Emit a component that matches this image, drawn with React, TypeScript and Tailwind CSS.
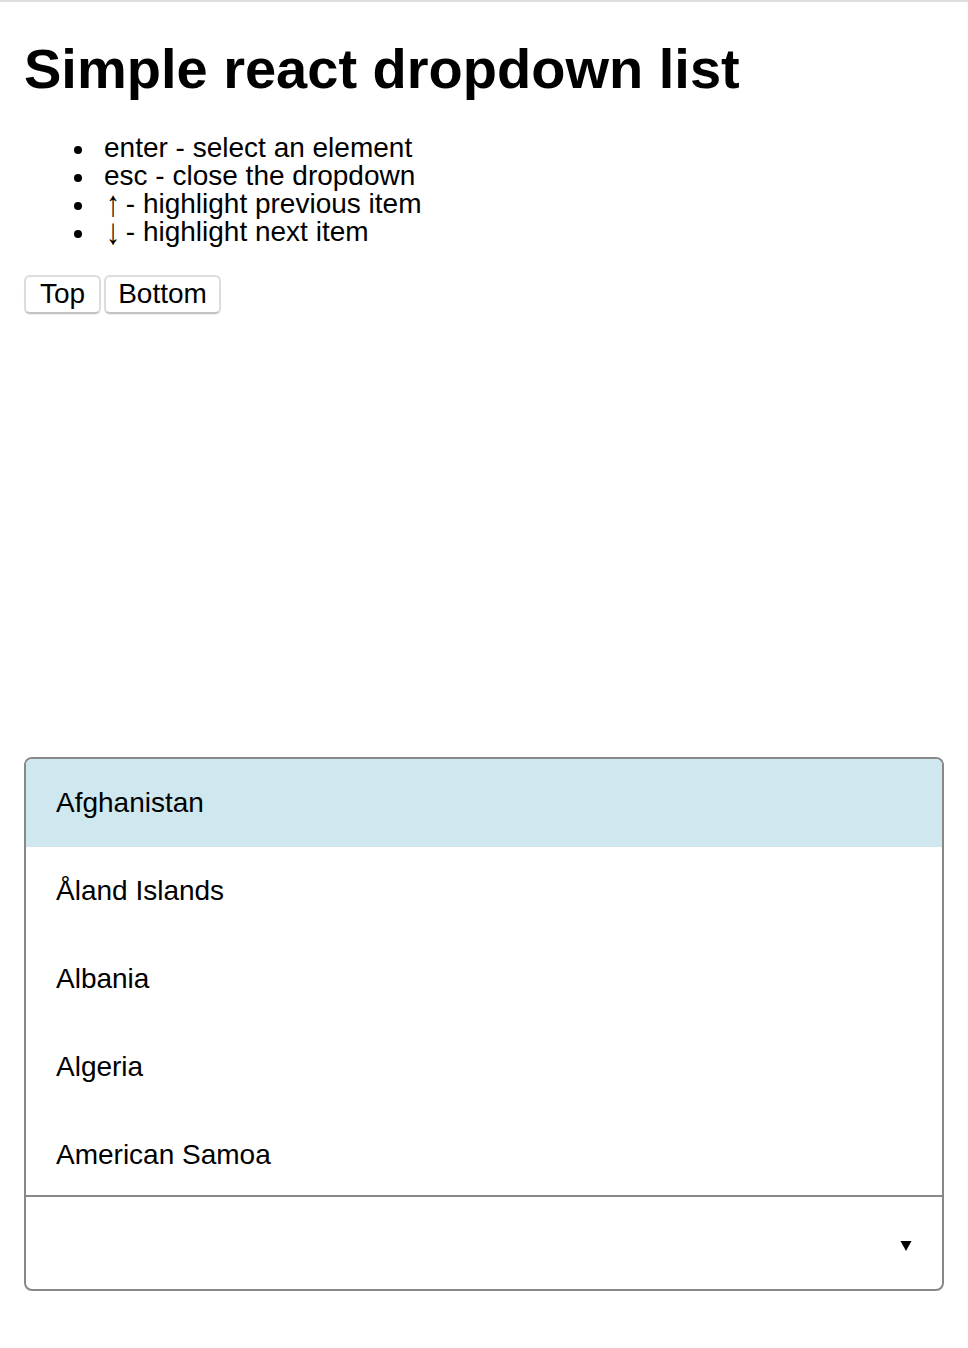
import React from "react";

const countries = ["Afghanistan", "Åland Islands", "Albania", "Algeria", "American Samoa"];

function Bullet() {
  return <span className="mt-[12px] mr-[22px] w-[8px] h-[8px] shrink-0 rounded-full bg-black" />;
}

export default function App() {
  return (
    <div className="min-h-screen bg-white border-t-2 border-[#dedede] px-6 text-black font-['Liberation_Sans',Arial,sans-serif]">
      <h1 className="mt-[35px] text-[56px] leading-[64px] font-bold">Simple react dropdown list</h1>
      <ul className="mt-[33px] pl-[50px] text-[28px] leading-[28px]">
        <li className="flex items-start">
          <Bullet />
          <span>enter - select an element</span>
        </li>
        <li className="flex items-start">
          <Bullet />
          <span>esc - close the dropdown</span>
        </li>
        <li className="flex items-start">
          <Bullet />
          <span>
            <span className="inline-block origin-center scale-y-[1.3] translate-x-[2px]">↑</span> - highlight previous item
          </span>
        </li>
        <li className="flex items-start">
          <Bullet />
          <span>
            <span className="inline-block origin-center scale-y-[1.3] translate-x-[2px]">↓</span> - highlight next item
          </span>
        </li>
      </ul>
      <div className="mt-[29px] flex gap-[3px]">
        <button className="h-[39px] flex items-center px-[14px] pb-[1px] text-[28px] leading-[28px] bg-white border-2 border-[#dcdcdc] border-b-[#c4c4c4] rounded-[6px] shadow-[0_1px_1px_rgba(0,0,0,0.08)]">
          Top
        </button>
        <button className="h-[39px] flex items-center px-[12px] pb-[1px] text-[28px] leading-[28px] bg-white border-2 border-[#dcdcdc] border-b-[#c4c4c4] rounded-[6px] shadow-[0_1px_1px_rgba(0,0,0,0.08)]">
          Bottom
        </button>
      </div>
      <div className="mt-[443px] border-2 border-[#888888] rounded-[8px] overflow-hidden">
        <div className="h-[436px] overflow-hidden">
          {countries.map((c, i) => (
            <div
              key={c}
              className={
                i === 0
                  ? "h-[88px] flex items-center pl-[30px] text-[28px] leading-[28px] bg-[#cfe7ee]"
                  : "h-[88px] flex items-center pl-[30px] text-[28px] leading-[28px] bg-white"
              }
            >
              {c}
            </div>
          ))}
        </div>
        <div className="border-t-2 border-[#888888] h-[94px] flex items-center justify-end pr-[30px] pt-[6px]">
          <svg width="12" height="10" viewBox="0 0 12 10">
            <polygon points="0.5,0 11.5,0 6,10" fill="#000" />
          </svg>
        </div>
      </div>
    </div>
  );
}
